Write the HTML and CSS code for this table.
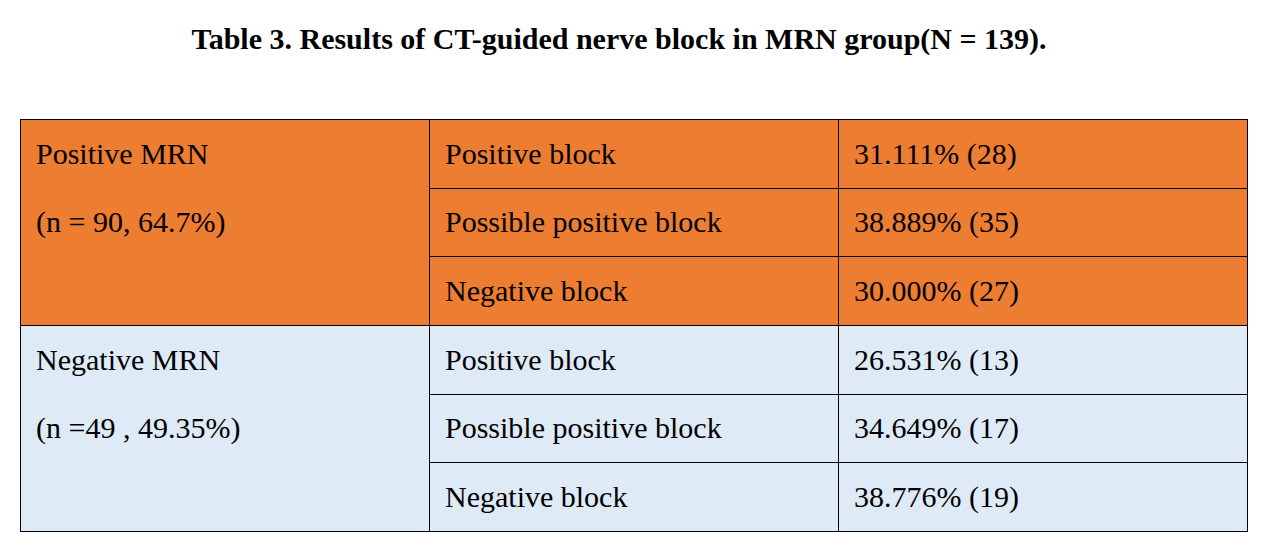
FILE: index.html
```html
<!DOCTYPE html>
<html>
<head>
<meta charset="utf-8">
<link rel="stylesheet" href="styles.css">
</head>
<body>
<h1 class="title">Table 3. Results of CT-guided nerve block in MRN group(N = 139).</h1>
<table class="results">
  <tr class="pos">
    <td class="group" rowspan="3"><div class="line">Positive MRN</div><div class="line">(n = 90, 64.7%)</div></td>
    <td>Positive block</td>
    <td>31.111% (28)</td>
  </tr>
  <tr class="pos">
    <td>Possible positive block</td>
    <td>38.889% (35)</td>
  </tr>
  <tr class="pos">
    <td>Negative block</td>
    <td>30.000% (27)</td>
  </tr>
  <tr class="neg">
    <td class="group" rowspan="3"><div class="line">Negative MRN</div><div class="line">(n =49 , 49.35%)</div></td>
    <td>Positive block</td>
    <td>26.531% (13)</td>
  </tr>
  <tr class="neg">
    <td>Possible positive block</td>
    <td>34.649% (17)</td>
  </tr>
  <tr class="neg">
    <td>Negative block</td>
    <td>38.776% (19)</td>
  </tr>
</table>
</body>
</html>
```
FILE: styles.css
```css
html, body {
  margin: 0;
  padding: 0;
  background: #ffffff;
}
body {
  font-family: "Liberation Serif", "Times New Roman", serif;
  color: #000000;
}
.title {
  margin: 0;
  padding: 24px 25px 0 0;
  height: 119px;
  box-sizing: border-box;
  font-size: 30px;
  line-height: 30px;
  font-weight: bold;
  text-align: center;
}
.results {
  margin-left: 20px;
  border-collapse: collapse;
  table-layout: fixed;
  width: 1227px;
}
.results td {
  border: 1px solid #000000;
  height: 68.67px;
  padding: 0 15px;
  font-size: 30px;
  width: 409px;
  vertical-align: middle;
  box-sizing: border-box;
}
.results td.group {
  vertical-align: top;
}
.line {
  height: 68px;
  line-height: 68px;
}
.pos td {
  background: #ed7d31;
}
.neg td {
  background: #deeaf6;
}
```
